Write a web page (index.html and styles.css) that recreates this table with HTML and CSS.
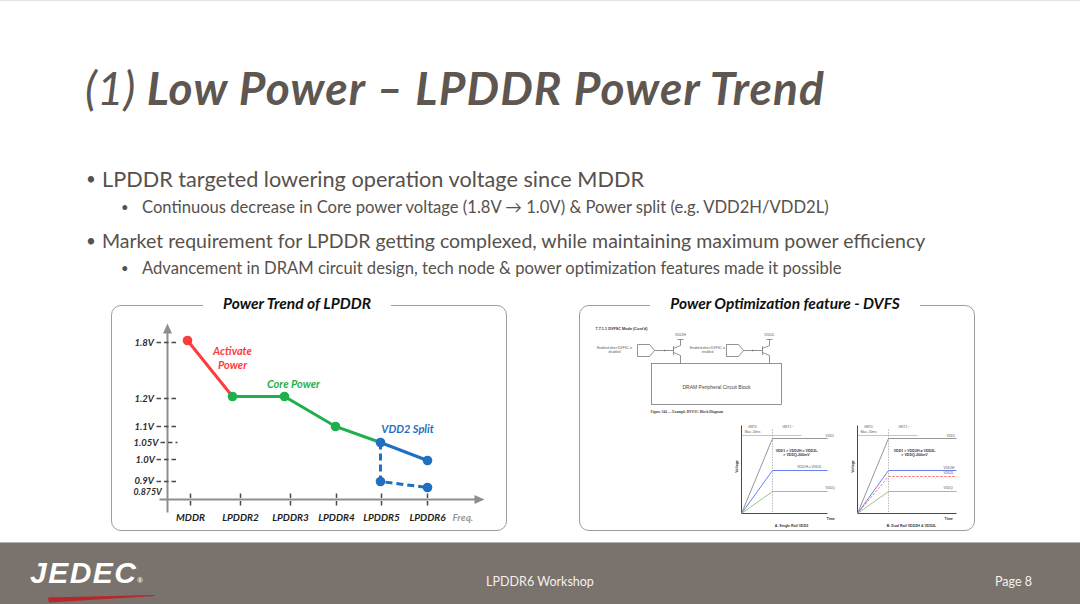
FILE: index.html
```html
<!DOCTYPE html>
<html lang="en">
<head>
<meta charset="utf-8">
<title>LPDDR Power Trend</title>
<link rel="stylesheet" href="styles.css">
</head>
<body>
<main class="slide">
  <h1 class="title"><span class="num">(1)</span> Low Power – LPDDR Power Trend</h1>
  <ul class="points">
    <li class="l1 big">LPDDR targeted lowering operation voltage since MDDR</li>
    <li class="l2">Continuous decrease in Core power voltage (1.8V → 1.0V) &amp; Power split (e.g. VDD2H/VDD2L)</li>
    <li class="l1 gap">Market requirement for LPDDR getting complexed, while maintaining maximum power efficiency</li>
    <li class="l2 last">Advancement in DRAM circuit design, tech node &amp; power optimization features made it possible</li>
  </ul>
  <div class="figures">
    <section class="fig">
      <div class="fig-head left"><span class="fig-title">Power Trend of LPDDR</span></div>
      <svg class="chart" viewBox="112.5 306.5 393 223" width="393" height="223">
        <line class="axis" x1="168" y1="513" x2="168" y2="332"/>
        <line class="axis" x1="160" y1="500" x2="476" y2="500"/>
        <polygon class="axis-head" points="168,324 163.5,334 172.5,334"/>
        <polygon class="axis-head" points="485,500 475,495.5 475,504.5"/>
        <g class="tick">
          <line x1="157" y1="343" x2="178" y2="343"/>
          <line x1="157" y1="399" x2="178" y2="399"/>
          <line x1="157" y1="427" x2="178" y2="427"/>
          <line x1="161" y1="443" x2="178" y2="443"/>
          <line x1="157" y1="460" x2="178" y2="460"/>
          <line x1="157" y1="482" x2="178" y2="482"/>
          <line x1="191" y1="494" x2="191" y2="509"/>
          <line x1="241" y1="494" x2="241" y2="509"/>
          <line x1="291" y1="494" x2="291" y2="509"/>
          <line x1="337" y1="494" x2="337" y2="509"/>
          <line x1="382" y1="494" x2="382" y2="509"/>
          <line x1="428" y1="494" x2="428" y2="509"/>
        </g>
        <g class="ylab">
          <text x="135" y="346.5">1.8V</text>
          <text x="135" y="402.5">1.2V</text>
          <text x="135" y="430.5">1.1V</text>
          <text x="134" y="446.5">1.05V</text>
          <text x="136" y="463.5">1.0V</text>
          <text x="135" y="484">0.9V</text>
          <text class="small" x="134" y="495">0.875V</text>
        </g>
        <g class="xlab">
          <text x="191" y="521">MDDR</text>
          <text x="241" y="521">LPDDR2</text>
          <text x="291" y="521">LPDDR3</text>
          <text x="337" y="521">LPDDR4</text>
          <text x="382" y="521">LPDDR5</text>
          <text x="428" y="521">LPDDR6</text>
        </g>
        <text class="freq" x="453" y="521">Freq.</text>
        <line class="ln red" x1="188" y1="341" x2="233" y2="397"/>
        <polyline class="ln green" points="233,397 285,397 336,427 381,443"/>
        <line class="ln blue" x1="381" y1="443" x2="428" y2="461"/>
        <polyline class="ln blue dash" points="381,443 381,482 428,488"/>
        <circle class="red-f" cx="188" cy="341" r="4.8"/>
        <circle class="green-f" cx="233" cy="397" r="4.8"/>
        <circle class="green-f" cx="285" cy="397" r="4.8"/>
        <circle class="green-f" cx="336" cy="427" r="4.8"/>
        <circle class="blue-f" cx="381" cy="443" r="4.8"/>
        <circle class="blue-f" cx="428" cy="461" r="4.8"/>
        <circle class="blue-f" cx="381" cy="482" r="4.8"/>
        <circle class="blue-f" cx="428" cy="488" r="4.8"/>
        <text class="note red-f" x="233" y="355">Activate</text>
        <text class="note red-f" x="233" y="369.5">Power</text>
        <text class="note green-f" x="294" y="388.5">Core Power</text>
        <text class="note blue-f" x="408" y="433.5">VDD2 Split</text>
      </svg>
    </section>
    <section class="fig">
      <div class="fig-head right"><span class="fig-title">Power Optimization feature - DVFS</span></div>
      <svg class="chart spec" viewBox="580.5 306.5 393 223" width="393" height="223">
        <text class="s-head" x="596" y="330">7.7.1.1  DVFSC Mode (Cont'd)</text>
        <text class="s-tiny mid" x="615" y="349">Enabled when DVFSC is</text>
        <text class="s-tiny mid" x="615" y="353.5">disabled</text>
        <polygon class="s-wire" points="638,345 650,345 655,351 650,357 638,357"/>
        <line class="s-wire" x1="655" y1="351" x2="674" y2="351"/>
        <circle class="s-dot" cx="665" cy="351" r="0.8"/>
        <polyline class="s-wire" points="674,346.5 674,355.5"/>
        <polyline class="s-wire" points="674,349 681,346 681,340"/>
        <polyline class="s-wire" points="674,353 681,356 681,364"/>
        <line class="s-wire" x1="678" y1="340" x2="684" y2="340"/>
        <text class="s-tiny mid" x="681" y="336.5">VDD2H</text>
        <text class="s-tiny mid" x="708" y="349">Enabled when DVFSC is</text>
        <text class="s-tiny mid" x="708" y="353.5">enabled</text>
        <polygon class="s-wire" points="727,345 739,345 744,351 739,357 727,357"/>
        <line class="s-wire" x1="744" y1="351" x2="763" y2="351"/>
        <circle class="s-dot" cx="753" cy="351" r="0.8"/>
        <polyline class="s-wire" points="763,346.5 763,355.5"/>
        <polyline class="s-wire" points="763,349 770,346 770,340"/>
        <polyline class="s-wire" points="763,353 770,356 770,364"/>
        <line class="s-wire" x1="767" y1="340" x2="773" y2="340"/>
        <text class="s-tiny mid" x="770" y="336.5">VDD2L</text>
        <rect class="s-wire" x="652" y="364" width="130" height="41"/>
        <text class="s-body" x="717" y="389">DRAM Peripheral Circuit Block</text>
        <text class="s-cap" x="651" y="413">Figure 344 — Example DVFSC Block Diagram</text>

        <g class="plot">
          <line class="s-axis" x1="742" y1="426" x2="742" y2="514"/>
          <line class="s-axis" x1="742" y1="514" x2="828" y2="514"/>
          <line class="s-vdash" x1="773" y1="430" x2="773" y2="514"/>
          <text class="s-tiny mid" x="753" y="428.5">tINIT0</text>
          <text class="s-tiny mid" x="753" y="433">Max. 20ms</text>
          <line class="s-thin" x1="742" y1="436" x2="773" y2="436"/>
          <text class="s-tiny" x="783" y="428.5">tINIT1 ~</text>
          <line class="s-thin" x1="773" y1="436" x2="802" y2="436"/>
          <polyline class="s-vdd1" points="742,514 773,439 828,439"/>
          <text class="s-tiny" x="826" y="437.5">VDD1</text>
          <text class="s-bold mid" x="797" y="452">VDD1 &gt; VDD2H = VDD2L</text>
          <text class="s-bold mid" x="797" y="456.5">&gt; VDDQ-200mV</text>
          <polyline class="s-vdd2" points="742,514 773,471 828,471"/>
          <text class="s-tiny mid" x="810" y="468.5">VDD2H = VDD2L</text>
          <polyline class="s-vddq" points="742,514 773,492 828,492"/>
          <text class="s-tiny" x="826" y="489.5">VDDQ</text>
          <text class="s-bold mid" x="0" y="0" transform="translate(738 467) rotate(-90)">Voltage</text>
          <text class="s-bold" x="827" y="520.5">Time</text>
          <text class="s-bold mid" x="792" y="527">A. Single Rail VDD2</text>
        </g>
        <g class="plot">
          <line class="s-axis" x1="858" y1="426" x2="858" y2="514"/>
          <line class="s-axis" x1="858" y1="514" x2="957" y2="514"/>
          <line class="s-vdash" x1="889" y1="430" x2="889" y2="514"/>
          <text class="s-tiny mid" x="869" y="428.5">tINIT0</text>
          <text class="s-tiny mid" x="869" y="433">Max. 20ms</text>
          <line class="s-thin" x1="858" y1="436" x2="889" y2="436"/>
          <text class="s-tiny" x="899" y="428.5">tINIT1 ~</text>
          <line class="s-thin" x1="889" y1="436" x2="918" y2="436"/>
          <polyline class="s-vdd1" points="858,514 889,439 957,439"/>
          <text class="s-tiny" x="947" y="437.5">VDD1</text>
          <text class="s-bold mid" x="915" y="452">VDD1 &gt; VDD2H ≥ VDD2L</text>
          <text class="s-bold mid" x="915" y="456.5">&gt; VDDQ-200mV</text>
          <polyline class="s-vdd2" points="858,514 889,471 957,471"/>
          <polyline class="s-vdd2l" points="858,514 889,477 957,477"/>
          <text class="s-tiny" x="944" y="469.5">VDD2H</text>
          <text class="s-tiny" x="944" y="474">VDD2L</text>
          <polyline class="s-vddq" points="858,514 889,492 957,492"/>
          <text class="s-tiny" x="944" y="489.5">VDDQ</text>
          <text class="s-bold mid" x="0" y="0" transform="translate(854 467) rotate(-90)">Voltage</text>
          <text class="s-bold" x="945" y="520.5">Time</text>
          <text class="s-bold mid" x="912" y="527">B. Dual Rail VDD2H &amp; VDD2L</text>
        </g>
      </svg>
    </section>
  </div>
</main>
<footer class="footer">
  <div class="logo">
    <span class="logo-word">JEDEC<span class="reg">®</span></span>
    <svg class="swoosh" viewBox="0 0 106 8" width="106" height="8"><polygon points="0,2.5 106,0 106,1 1,7.5"/></svg>
  </div>
  <div class="event">LPDDR6 Workshop</div>
  <div class="page">Page 8</div>
</footer>
</body>
</html>
```
FILE: styles.css
```css
* { box-sizing: border-box; }
html, body { margin: 0; padding: 0; }
body {
  width: 1080px;
  height: 604px;
  overflow: hidden;
  background: #ffffff;
  border-top: 1px solid #e4e4e4;
  display: flex;
  flex-direction: column;
  font-family: Lato, "Open Sans", sans-serif;
}
.slide { flex: 1; }

.title {
  margin: 0;
  height: 112px;
  padding: 62px 0 0 85px;
  font-size: 46px;
  line-height: 50px;
  font-weight: 700;
  font-style: italic;
  letter-spacing: 1.1px;
  color: #5e5651;
  white-space: nowrap;
}
.title .num { font-weight: 400; letter-spacing: 0; }

.points {
  list-style: none;
  margin: 52px 0 0;
  padding: 0;
  color: #57514c;
  white-space: nowrap;
}
.points li { display: flex; }
.l1 {
  padding-left: 86px;
  font-size: 19.5px;
  line-height: 28px;
}
.l1.big { font-size: 21.7px; }
.l1::before { content: "•"; width: 16px; flex: none; font-size: 17px; }
.l2 {
  padding-left: 121px;
  font-size: 16.6px;
  line-height: 28px;
}
.l2::before { content: "•"; width: 21px; flex: none; font-size: 13px; }
.l1.gap { margin-top: 6px; }
.l2.last { line-height: 26px; }

.figures {
  display: flex;
  gap: 72px;
  margin: 24px 0 0 111px;
}
.fig {
  width: 396px;
  height: 226px;
  border: 1.5px solid #9d9d9d;
  border-radius: 10px;
  display: flex;
  flex-direction: column;
}
.fig-head {
  display: flex;
  justify-content: center;
  height: 20px;
  margin: -13.5px 0 -6.5px;
}
.fig-head.left { padding-right: 24px; }
.fig-head.right { padding-left: 16px; }
.fig-title {
  position: relative;
  z-index: 1;
  background: #ffffff;
  padding: 0 20px;
  font-size: 15.5px;
  line-height: 20px;
  font-weight: 700;
  font-style: italic;
  color: #111111;
}
.chart { display: block; width: 393px; height: 223px; }

/* LPDDR chart */
.axis { stroke: #8e8e8e; stroke-width: 2; }
.axis-head { fill: #8e8e8e; }
.tick line { stroke: #4a4a4a; stroke-width: 1.5; stroke-dasharray: 4.5 3; }
.ylab text, .xlab text, .freq, .note {
  font-family: Lato, sans-serif;
  font-weight: 700;
  font-style: italic;
}
.ylab text { font-size: 9.5px; fill: #2a2a2a; }
.ylab text.small { font-size: 8.8px; }
.xlab text { font-size: 10px; fill: #1e1e1e; text-anchor: middle; }
.freq { font-size: 10px; fill: #9a9a9a; }
.ln { stroke-width: 3; fill: none; }
.ln.red { stroke: #ff3b3b; }
.ln.green { stroke: #1fb04d; }
.ln.blue { stroke: #1f6fc2; }
.ln.dash { stroke-dasharray: 7 4; }
.red-f { fill: #ff3b3b; }
.green-f { fill: #1fb04d; }
.blue-f { fill: #1f6fc2; }
.note { font-size: 11px; text-anchor: middle; }

/* DVFS spec figure */
.spec text { font-family: "Liberation Sans", Arial, sans-serif; fill: #555555; }
.spec .mid { text-anchor: middle; }
.s-head { font-size: 3.8px; font-weight: 700; fill: #333333 !important; }
.s-tiny { font-size: 3.2px; }
.s-body { font-size: 5px; text-anchor: middle; fill: #444444 !important; }
.s-cap { font-size: 3.6px; font-weight: 700; font-family: "Liberation Serif", serif !important; fill: #444444 !important; }
.s-bold { font-size: 3.6px; font-weight: 700; fill: #333333 !important; }
.s-wire { stroke: #666666; stroke-width: 0.7; fill: none; }
.s-dot { fill: #666666; }
.s-axis { stroke: #333333; stroke-width: 0.9; }
.s-vdash { stroke: #888888; stroke-width: 0.6; stroke-dasharray: 1.5 1.2; }
.s-thin { stroke: #888888; stroke-width: 0.5; }
.s-vdd1 { stroke: #8a8a8a; stroke-width: 0.9; fill: none; }
.s-vdd2 { stroke: #6a7ff0; stroke-width: 1; fill: none; }
.s-vdd2l { stroke: #f06a6a; stroke-width: 0.9; stroke-dasharray: 2.5 1.5; fill: none; }
.s-vddq { stroke: #8cbf78; stroke-width: 0.9; fill: none; }

/* footer */
.footer {
  height: 62px;
  background: #7a726c;
  border-top: 1px solid #b9b3ae;
  display: grid;
  grid-template-columns: 1fr auto 1fr;
  align-items: center;
  padding: 15px 30px 0 30px;
  color: #f4f0ec;
  font-size: 12.5px;
}
.logo {
  justify-self: start;
  align-self: start;
  margin-top: 2px;
  display: flex;
  flex-direction: column;
}
.logo-word {
  font-family: "Liberation Sans", Arial, sans-serif;
  font-weight: 700;
  font-style: italic;
  font-size: 30px;
  line-height: 26px;
  letter-spacing: 1.5px;
  color: #ffffff;
}
.logo-word .reg { font-size: 7px; letter-spacing: 0; font-style: normal; }
.swoosh { display: block; margin: 1px 0 0 18px; }
.swoosh polygon { fill: #b8252b; }
.event { text-align: center; }
.page { justify-self: end; padding-right: 18px; }
```
